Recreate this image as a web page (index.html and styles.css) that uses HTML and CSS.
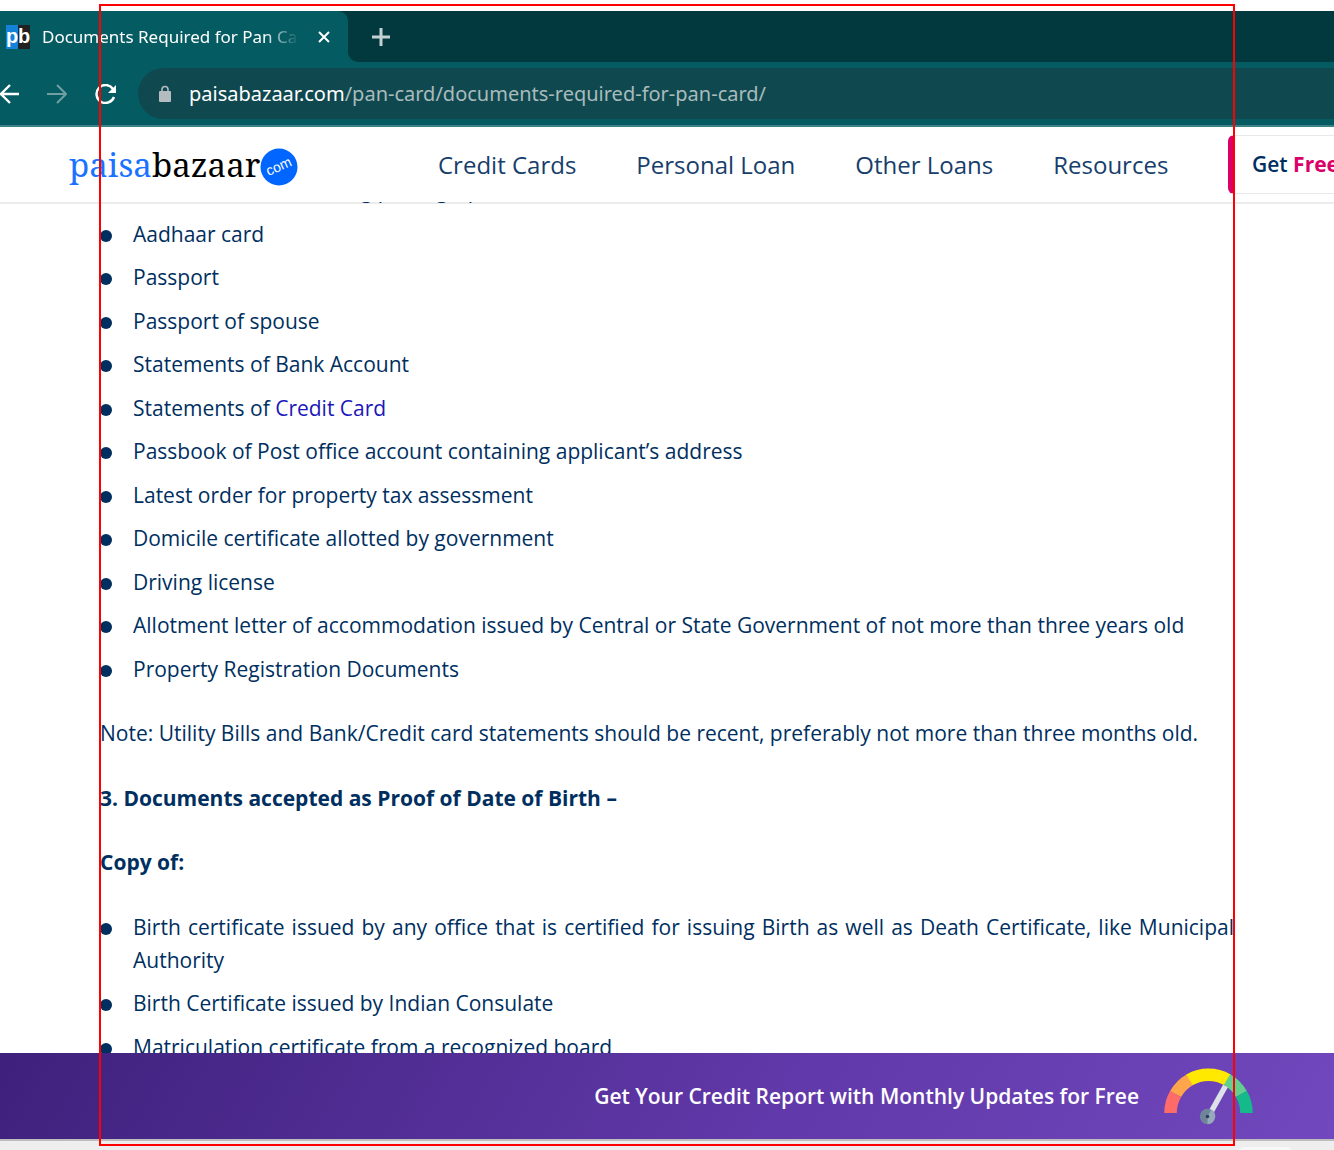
FILE: index.html
```html
<!DOCTYPE html>
<html lang="en">
<head>
<meta charset="utf-8">
<title>Documents Required for Pan Card</title>
<link rel="stylesheet" href="styles.css">
</head>
<body>
<div class="window">
  <div class="tab-strip">
    <div class="tab-slot">
      <div class="tab">
        <span class="favicon" aria-hidden="true"><span class="favicon-p">p</span><span class="favicon-b">b</span></span>
        <span class="tab-title">Documents Required for Pan Card</span>
        <button class="icon-button" aria-label="Close tab">
          <svg width="14" height="14" viewBox="0 0 14 14"><path d="M2 2l10 10M12 2L2 12" stroke="#fff" stroke-width="2" fill="none"/></svg>
        </button>
      </div>
    </div>
    <div class="tab-rest">
      <button class="icon-button" aria-label="New tab">
        <svg width="18" height="18" viewBox="0 0 18 18"><path d="M9 0v18M0 9h18" stroke="#c3d1d2" stroke-width="3" fill="none"/></svg>
      </button>
    </div>
  </div>
  <div class="toolbar">
    <div class="nav-buttons">
      <button class="icon-button" aria-label="Back">
        <svg width="19" height="20" viewBox="1 0 19 20"><path d="M20 10H1M11 1L2 10l9 9" stroke="#fff" stroke-width="2.400" fill="none"/></svg>
      </button>
      <button class="icon-button" aria-label="Forward">
        <svg width="20" height="20" viewBox="0 0 20 20"><path d="M0 10h19M10 1l9 9-9 9" stroke="#6f9fa2" stroke-width="2" fill="none"/></svg>
      </button>
      <button class="icon-button" aria-label="Reload">
        <svg width="22" height="20" viewBox="0 0 22 20"><path d="M18 5A9 9 0 1 0 19 13" stroke="#fff" stroke-width="2.400" fill="none"/><path d="M21 1v8h-8z" fill="#fff"/></svg>
      </button>
    </div>
    <div class="address-bar">
      <svg width="14" height="18" viewBox="0 0 14 18" aria-hidden="true"><rect x="1" y="6" width="12" height="11" rx="1" fill="#b4bcbf"/><path d="M4 7V4.500a3 3 0 0 1 6 0V7" stroke="#b4bcbf" stroke-width="1.600" fill="none"/></svg>
      <span class="url"><span class="url-host">paisabazaar.com</span>/pan-card/documents-required-for-pan-card/</span>
    </div>
  </div>
  <header class="site-header">
    <a class="logo" href="#"><span class="logo-text"><span class="logo-blue">paisa</span>bazaar</span><svg width="38" height="42" viewBox="0 0 38 42"><circle cx="19" cy="23" r="18.500" fill="#06f"/><text x="19" y="27" text-anchor="middle" transform="rotate(-24 19 23)" class="logo-com">com</text></svg></a>
    <nav class="site-nav">
      <a href="#">Credit Cards</a>
      <a href="#">Personal Loan</a>
      <a href="#">Other Loans</a>
      <a href="#">Resources</a>
    </nav>
    <a class="score-link" href="#">Get <strong>Free</strong></a>
  </header>
  <main class="content">
    <p class="intro">Documents each containing photograph</p>
    <ul>
      <li>Aadhaar card</li>
      <li>Passport</li>
      <li>Passport of spouse</li>
      <li>Statements of Bank Account</li>
      <li>Statements of <a href="#">Credit Card</a></li>
      <li>Passbook of Post office account containing applicant’s address</li>
      <li>Latest order for property tax assessment</li>
      <li>Domicile certificate allotted by government</li>
      <li>Driving license</li>
      <li>Allotment letter of accommodation issued by Central or State Government of not more than three years old</li>
      <li>Property Registration Documents</li>
    </ul>
    <p>Note: Utility Bills and Bank/Credit card statements should be recent, preferably not more than three months old.</p>
    <h3>3. Documents accepted as Proof of Date of Birth –</h3>
    <p><strong>Copy of:</strong></p>
    <ul>
      <li>Birth certificate issued by any office that is certified for issuing Birth as well as Death Certificate, like Municipal Authority</li>
      <li>Birth Certificate issued by Indian Consulate</li>
      <li>Matriculation certificate from a recognized board</li>
    </ul>
  </main>
  <a class="banner" href="#">
    <span>Get Your Credit Report with Monthly Updates for Free</span>
    <svg width="90" height="58" viewBox="0 0 90 58" aria-hidden="true">
      <g fill="none" stroke-width="12.500">
        <path d="M6.500 46A38 38 0 0 1 11.600 27" stroke="#ff6b68"/>
        <path d="M11.600 27A38 38 0 0 1 26 12.600" stroke="#ffa64d"/>
        <path d="M25.500 12.900A38 38 0 0 1 63.500 12.900" stroke="#ffe900"/>
        <path d="M63 12.600A38 38 0 0 1 77.400 27" stroke="#61cf8f"/>
        <path d="M77.400 27A38 38 0 0 1 82.500 46" stroke="#14ba8a"/>
      </g>
      <path d="M47 45L61.500 19" stroke="#dce2e8" stroke-width="5.500"/>
      <circle cx="43.500" cy="49.500" r="7.700" fill="#6f859b"/>
      <path d="M43.500 49.500l4-7a8 8 0 0 1-4 14.700z" fill="#97a9bd"/>
      <circle cx="43.500" cy="49.500" r="1.800" fill="#2c3d50"/>
    </svg>
  </a>
  <footer class="status-strip"><span class="status-pill"></span></footer>
  <div class="selection"></div>
</div>
</body>
</html>
```
FILE: styles.css
```css
* {
  box-sizing: border-box;
}

body {
  margin: 0;
  background: #fff;
  color: #002f5f;
  font-family: "Open Sans", sans-serif;
}

a {
  color: inherit;
  text-decoration: none;
}

.window {
  position: relative;
  display: flex;
  flex-direction: column;
  height: 100vh;
  padding-top: 11px;
  overflow: hidden;
}

.icon-button {
  display: flex;
  padding: 0;
  border: 0;
  background: none;
}

.tab-strip {
  display: flex;
  flex: none;
  height: 51px;
  background: #055b62;
}

.tab-slot {
  flex: none;
  width: 348px;
  background: #02393e;
}

.tab {
  display: flex;
  align-items: center;
  height: 100%;
  padding-left: 6px;
  border-top-right-radius: 10px;
  background: #055b62;
  color: #fff;
  font: 17px "Noto Sans", sans-serif;
}

.tab-rest {
  display: flex;
  align-items: center;
  flex: 1;
  padding-left: 24px;
  border-bottom-left-radius: 10px;
  background: #02393e;
}

.favicon {
  display: flex;
  flex: none;
  width: 24px;
  height: 24px;
  margin-right: 12px;
  font: bold 20px/22px "Liberation Sans", sans-serif;
}

.favicon-p,
.favicon-b {
  flex: 1;
  display: flex;
  justify-content: center;
  min-width: 0;
}

.favicon-p {
  background: #1482d8;
}

.favicon-b {
  background: #222;
}

.tab-title {
  width: 257px;
  margin-right: 18px;
  overflow: hidden;
  white-space: nowrap;
  mask-image: linear-gradient(to right, #000 86%, transparent);
}

.toolbar {
  display: flex;
  align-items: center;
  flex: none;
  height: 65px;
  border-bottom: 2px solid #3c8187;
  background: #055b62;
}

.nav-buttons {
  display: flex;
  gap: 28px;
  width: 138px;
}

.address-bar {
  display: flex;
  align-items: center;
  flex: 1;
  gap: 17px;
  height: 51px;
  padding-left: 20px;
  border-radius: 26px 0 0 26px;
  background: #0f494f;
  color: #a9bbbd;
  font: 20px "Noto Sans", sans-serif;
}

.url-host {
  color: #fff;
}

.site-header {
  display: flex;
  align-items: center;
  flex: none;
  height: 75px;
  padding-left: 69px;
  background: #fff;
  white-space: nowrap;
}

.logo {
  display: flex;
  align-items: center;
  flex: none;
  width: 369px;
  color: #000;
  font: 33px/44px "Noto Serif", "Liberation Serif", serif;
}

.logo-blue {
  color: #1a73ff;
}

.logo-com {
  fill: #fff;
  font: 14px "Liberation Sans", sans-serif;
}

.site-nav {
  display: flex;
  flex: none;
  gap: 60px;
  color: #173e6b;
  font-size: 24px;
  line-height: 32px;
}

.score-link {
  flex: none;
  margin-left: auto;
  width: 106px;
  height: 59px;
  padding-left: 17px;
  overflow: hidden;
  border: 1px solid #e8eaea;
  border-right: 0;
  border-left: 7px solid #db0069;
  border-radius: 6px 0 0 6px;
  font-size: 21px;
  font-weight: 600;
  line-height: 57px;
}

.score-link strong {
  color: #db0069;
  font-weight: 700;
}

.content {
  flex: 1;
  min-height: 0;
  padding: 0 100px;
  overflow: hidden;
  box-shadow: inset 0 2px #ececec;
  font-size: 21px;
  line-height: 33px;
  text-align: justify;
}

.content p,
.content h3,
.content ul {
  margin: 0 0 32px;
  padding: 0;
  font-size: 21px;
}

.content .intro {
  margin: -28px 0 11px;
}

.content h3,
.content ul {
  margin-bottom: 31px;
}

.content ul {
  list-style: none;
}

.content li {
  margin-bottom: 10px;
  padding-left: 33px;
}

.content li::before {
  content: "";
  display: inline-block;
  width: 12px;
  height: 12px;
  margin: 0 21px 0 -33px;
  border-radius: 50%;
  background: #002f5f;
}

.content li:nth-child(even) {
  margin-bottom: 11px;
}

.content li:last-child {
  margin-bottom: 0;
}

.content li a {
  color: #2017b8;
}

.banner {
  display: flex;
  align-items: center;
  justify-content: flex-end;
  flex: none;
  gap: 25px;
  height: 86px;
  padding-right: 80px;
  background: linear-gradient(120deg, #3e217c, #6239aa 60%, #7148bd);
  color: #fff;
  font-size: 21px;
  font-weight: 600;
}

.status-strip {
  display: flex;
  justify-content: flex-end;
  flex: none;
  height: 11px;
  padding: 6px 40px 0 0;
  border-top: 2px solid #bdbdbd;
  background: #eee;
  overflow: hidden;
}

.status-pill {
  width: 57px;
  height: 20px;
  border-radius: 8px;
  background: #f8f8f8;
}

.selection {
  position: absolute;
  inset: 4px 99px;
  border: 2px solid #f00;
  pointer-events: none;
}
```
